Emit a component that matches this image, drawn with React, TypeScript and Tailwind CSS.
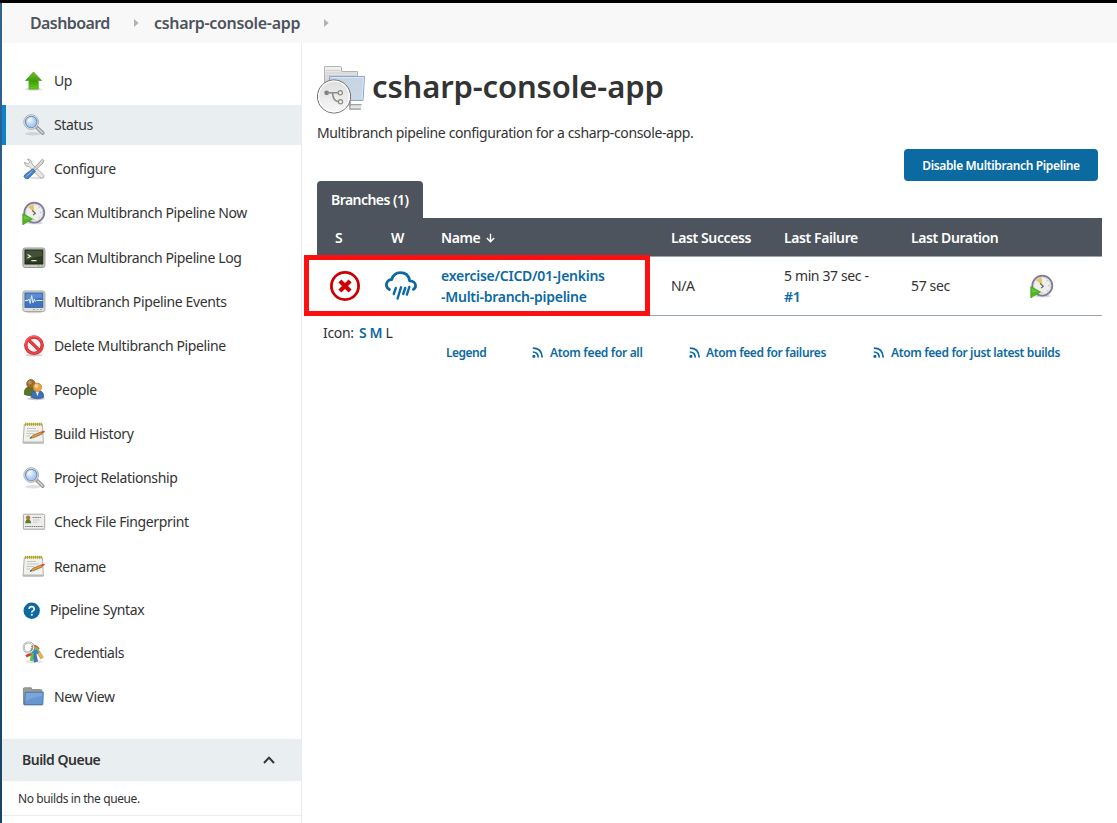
import React from "react";

type IconProps = { className?: string };

const UpIcon = () => (
  <svg width="24" height="24" viewBox="0 0 24 24">
    <defs>
      <linearGradient id="up" x1="0" y1="0" x2="0" y2="1"><stop offset="0" stopColor="#6cc02a" /><stop offset=".55" stopColor="#3f9b0b" /><stop offset="1" stopColor="#62d40c" /></linearGradient>
    </defs>
    <ellipse cx="11.5" cy="20.3" rx="8.5" ry="1.4" fill="#bbb" opacity=".6" />
    <path d="M11.5 3 19.5 11.5H16.2V20H7V11.5H3.5Z" fill="url(#up)" stroke="#58a52a" strokeWidth=".9" />
  </svg>
);

const SearchIcon = () => (
  <svg width="24" height="24" viewBox="0 0 24 24">
    <defs><radialGradient id="lens" cx=".4" cy=".35"><stop offset="0" stopColor="#f2f8ff" /><stop offset="1" stopColor="#a9c8ef" /></radialGradient></defs>
    <ellipse cx="11" cy="20.8" rx="7.5" ry="1.7" fill="#999" opacity=".3" />
    <path d="M14.8 14.4 20.8 20.1" stroke="#909294" strokeWidth="3.6" strokeLinecap="round" />
    <path d="M15.8 15.4 20.6 19.8" stroke="#d0d0ce" strokeWidth="1.8" strokeLinecap="round" />
    <circle cx="9.2" cy="9" r="7.4" fill="#e5e6e4" stroke="#b2b4b1" strokeWidth="1" />
    <circle cx="9.2" cy="9" r="5.7" fill="url(#lens)" stroke="#6b92c6" strokeWidth="1.1" />
    <path d="M6 8.7Q6.4 5.4 9.7 5.2" stroke="#fff" fill="none" />
  </svg>
);

const ToolsIcon = () => (
  <svg width="24" height="24" viewBox="0 0 24 24">
    <ellipse cx="14" cy="21" rx="9" ry="1.2" fill="#999" opacity=".3" />
    <path d="M2.6 5.2Q2.5 9.6 7 9.5L18 20.5Q19.8 22 21.4 20.3T20.8 17.2L10 7Q10 2.5 5.4 2L7.8 4.8 5.8 7Z" fill="#e7e8e6" stroke="#a3a5a2" strokeWidth=".9" />
    <path d="M20.5 2.2 22 3.7 20.5 6.6 13.5 13 12 11.5 18 4.5Z" fill="#d8dad9" stroke="#8b8e8d" strokeWidth=".8" />
    <path d="M10.8 11.8 13.4 14.4 6.6 21.3Q4.5 22.3 2.8 20.8T3 17.6Z" fill="#4b84c9" stroke="#3a6eae" strokeWidth=".9" />
    <path d="M10.5 13.6 4.5 19.4" stroke="#91b8e6" />
  </svg>
);

const ClockIcon = ({ className }: IconProps) => (
  <svg width="24" height="24" viewBox="0 0 24 24" className={className}>
    <ellipse cx="13" cy="22" rx="8" ry="1.3" fill="#777" opacity=".3" />
    <circle cx="12.3" cy="11.7" r="9.9" fill="#eeefeb" stroke="#7f7c95" strokeWidth="1.9" />
    <circle cx="12.3" cy="11.7" r="8.6" fill="none" stroke="#d2d1da" strokeWidth=".9" />
    <path d="M12 11 6.2 6.3Q8.8 4 11.7 3.8Z" fill="#e6c15d" />
    <path d="M10.3 9.3 11.8 11.2M11.6 10.6 13.3 12.2 11.2 14.2" fill="none" stroke="#5a5a55" strokeWidth="1.1" />
    <path d="M19.3 11.7H18.4M12 18.8V18M17.3 6.4 16.7 7M17.4 16.7 16.8 16.2" stroke="#8d8d8d" strokeWidth=".9" />
    <path d="M0.8 12.6 10.6 18 .8 23.8Z" fill="#50b625" stroke="#46a01f" strokeWidth=".8" />
    <path d="M1.7 14.4 8 17.8 1.7 18.4Z" fill="#80d553" opacity=".5" />
  </svg>
);

const TerminalIcon = () => (
  <svg width="24" height="24" viewBox="0 0 24 24">
    <rect x="0.9" y="2" width="22" height="19.5" rx="2.2" fill="#cbccc8" stroke="#969894" />
    <rect x="3" y="4" width="17.8" height="14" fill="#2d3b24" stroke="#192113" />
    <path d="M3.5 4.5H20.3V10Q12 10.5 3.5 15Z" fill="#526342" opacity=".6" />
    <path d="M5.5 8.5 8.5 10.2 5.5 12M9.3 14.7H14.5" fill="none" stroke="#e5efd8" strokeWidth="1.2" />
    <path d="M15.5 20H17.5M19 20H20.5" stroke="#7ca765" />
  </svg>
);

const MonitorIcon = () => (
  <svg width="24" height="24" viewBox="0 0 24 24">
    <ellipse cx="12" cy="22.3" rx="8" ry="1" fill="#aaa" opacity=".5" />
    <rect x="0.9" y="1" width="22" height="20.5" rx="2.2" fill="#dedfdd" stroke="#a5a7a3" />
    <rect x="3" y="3" width="17.8" height="14.3" fill="#3f73c4" stroke="#345f9f" />
    <path d="M3.5 3.5H20.3V7.5Q10 8.5 3.5 12.5Z" fill="#77a3e1" opacity=".5" />
    <path d="M2.8 10.5H6L7 9 8.2 13.5 9.7 5.5 11 13 12.3 9.2 13.2 11.5 14.5 10.5H20.5" fill="none" stroke="#dfebdb" strokeWidth="1" />
    <path d="M11 19.5H13M15 19.5H16M18 19.5H20" stroke="#a6aaa2" />
  </svg>
);

const DeleteIcon = () => (
  <svg width="24" height="24" viewBox="0 0 24 24">
    <ellipse cx="12" cy="21.2" rx="8.5" ry="1.3" fill="#aaa" opacity=".6" />
    <circle cx="12" cy="11.2" r="8.2" fill="#f3f3f3" stroke="#c9252c" strokeWidth="3.4" />
    <path d="M6.3 5.7 17.7 16.7" stroke="#c9252c" strokeWidth="3.2" />
    <circle cx="12" cy="11.2" r="8.2" fill="none" stroke="#ea4147" strokeWidth="2.2" />
    <path d="M6.3 5.7 17.7 16.7" stroke="#e73e43" strokeWidth="2" />
    <path d="M3.6 9.2A8.5 8.5 0 0 1 19 5.7" fill="none" stroke="#fa8585" strokeWidth=".8" />
  </svg>
);

const PeopleIcon = () => (
  <svg width="24" height="24" viewBox="0 0 24 24">
    <ellipse cx="14" cy="20.8" rx="9" ry="1.4" fill="#999" opacity=".5" />
    <path d="M2.4 16.4Q1.8 10 6.5 9L11.5 9Q15 11 14 16.4Q8 19 2.4 16.4Z" fill="#5c7524" stroke="#4a6219" strokeWidth=".8" />
    <circle cx="8.9" cy="5.8" r="4.2" fill="#9c6b2e" stroke="#84591f" strokeWidth=".8" />
    <circle cx="7.8" cy="4.5" r="2" fill="#bf9050" />
    <path d="M9.2 19.5Q8.5 14.5 12.5 12.7H18Q22.3 14.5 21.5 19.5Q15.5 22 9.2 19.5Z" fill="#3f70b4" stroke="#2e5c9d" strokeWidth=".8" />
    <path d="m13.7 13 1.7 5.3 1.7-5.3Z" fill="#edf4ff" />
    <circle cx="15.4" cy="9.3" r="4.2" fill="#e5a445" stroke="#c28733" strokeWidth=".8" />
    <circle cx="14.4" cy="8" r="2" fill="#fbcf8c" />
  </svg>
);

const NotepadIcon = () => (
  <svg width="24" height="24" viewBox="0 0 24 24">
    <path d="M2.3 2.5H20.4L21.4 21H1Z" fill="#f1f1ed" stroke="#a7a9a4" strokeWidth=".9" />
    <path d="M1.2 19.6H21.2V21.4H1Z" fill="#b9bbb7" />
    <path d="M3 2.2H20" stroke="#cfc24a" strokeWidth="2" />
    <path d="M3.5 .8V3.8M5.5 .8V3.8M7.5 .8V3.8M9.5 .8V3.8M11.5 .8V3.8M13.5 .8V3.8M15.5 .8V3.8M17.5 .8V3.8M19.3 .8V3.8" stroke="#a69c35" strokeWidth=".9" />
    <path d="M5 6.5H14M5 9H17M4.5 11.5H12M4.5 14H8" stroke="#bec1be" strokeWidth=".9" />
    <path d="m8 16.2 3-3 8.2-3.3 1 2-8.3 3.7Z" fill="#d99f47" stroke="#97682c" strokeWidth=".8" />
    <path d="m19 9.7 2.1-1Q22.7 8.4 23 9.6 22.8 10.8 20.2 11.6Z" fill="#e34d36" />
    <path d="m7.7 16.5 1.4-1.3.7.8Z" fill="#222" />
  </svg>
);

const FingerprintIcon = () => (
  <svg width="24" height="24" viewBox="0 0 24 24">
    <rect x="1.4" y="4.2" width="21.3" height="15" rx="1" fill="#edeeea" stroke="#a9aba8" />
    <path d="M1.5 19.4H22.5" stroke="#bbb" />
    <circle cx="6.1" cy="7.8" r="2.2" fill="#a87d30" />
    <path d="M3.2 13.3Q3.2 10 5.3 9.4H7.2Q9.2 10.3 9.2 13.3Z" fill="#667a2b" />
    <path d="M10.5 7.5H19" stroke="#888" strokeWidth="1.2" strokeDasharray="2 .4" />
    <path d="M11 10H18M11 12.2H15.5" stroke="#c4c4c4" strokeWidth=".8" />
    <path d="M3 16.5H21.2" stroke="#777" strokeDasharray="1.5 .7" strokeWidth="1" />
  </svg>
);

const HelpIcon = () => (
  <svg width="17" height="17" viewBox="0 0 17 17" className="ml-px">
    <circle cx="8.7" cy="8.8" r="8.2" fill="#0b6aa2" />
    <path d="M6.2 6.9Q6.2 4.7 8.6 4.7T11.2 6.9Q11.2 8.1 9.8 8.9 8.8 9.5 8.8 10.5" fill="none" stroke="#fff" strokeWidth="1.7" />
    <circle cx="8.8" cy="12.8" r="1.05" fill="#fff" />
  </svg>
);

const CredentialsIcon = () => (
  <svg width="24" height="24" viewBox="0 0 24 24">
    <ellipse cx="12" cy="20.6" rx="9" ry="1.6" fill="#999" opacity=".25" />
    <path d="m15 9 5.2 8.2" stroke="#c29d35" strokeWidth="3.6" />
    <path d="m15 9 5 7.8" stroke="#e2bd50" strokeWidth="2.2" />
    <path d="M11.8 11 14 21" stroke="#3f76bb" strokeWidth="4.2" />
    <path d="M10.5 12 9.3 20" stroke="#62c62f" strokeWidth="3" />
    <path d="M4 15.3 9 13" stroke="#dc3b3f" strokeWidth="2.6" />
    <path d="M9.5 6Q13 3 17 8" fill="none" stroke="#d9553a" strokeWidth="2" />
    <path d="M9 8.2Q13 5 16.5 9.7" fill="none" stroke="#77bd3c" strokeWidth="2" />
    <path d="M9 11Q12 7.5 16 12.3" fill="none" stroke="#3c87c9" strokeWidth="3.4" />
    <circle cx="6.7" cy="6.5" r="5" fill="none" stroke="#9a9c9b" strokeWidth="2" />
    <circle cx="6.7" cy="6.5" r="5" fill="none" stroke="#ebecea" strokeWidth="1" />
  </svg>
);

const FolderIcon = () => (
  <svg width="24" height="24" viewBox="0 0 24 24">
    <path d="M1.3 4Q1.3 2.8 2.5 2.8H9.2L10 4.6H18.5Q20 4.6 20 6V19.5H1.6Z" fill="#9b9c98" stroke="#858783" strokeWidth=".9" />
    <path d="M3.2 7.2H21.3L20.8 19.6H2.6Z" fill="#6797d0" stroke="#4375b1" strokeWidth=".9" />
    <path d="M4 8H20.5L20.2 11Q11 12 3.5 16Z" fill="#8bb1df" opacity=".6" />
    <path d="M2 20.6H20.5" stroke="#ccc" />
  </svg>
);

const ProjectIcon = () => (
  <svg width="48" height="48" viewBox="0 0 48 48">
    <defs>
      <linearGradient id="paper" x1="0" y1="0" x2="0" y2="1"><stop stopColor="#f3f3f3" /><stop offset="1" stopColor="#b2b2b2" /></linearGradient>
      <linearGradient id="folder" x1="0" y1="0" x2="1" y2="1"><stop stopColor="#c3d1e1" /><stop offset="1" stopColor="#cdd8e5" /></linearGradient>
      <linearGradient id="disc" x1="0" y1="0" x2="0" y2="1"><stop stopColor="#dedede" /><stop offset="1" stopColor="#f7f7f7" /></linearGradient>
    </defs>
    <path d="M7.5 1Q7.5.5 8 .5H23.5Q24.5.5 24.5 2V5.5H40.5V30H7.5Z" fill="url(#paper)" stroke="#b2b2b2" />
    <path d="M9 4.5H23M9 7H39M9 9.5H39" stroke="#d0d0d0" />
    <path d="M12.5 10.5H47.5L46 34.5H12.5Z" fill="url(#folder)" stroke="#88a6d0" />
    <path d="M13.5 11.5H46.3L45 33.5" fill="none" stroke="#dce8f5" />
    <path d="M33 35.5V43H44M32 38.8H44.5" stroke="#a0a0a0" strokeWidth="1.6" fill="none" />
    <path d="M34.5 40.7H44.5" stroke="#e2e2e2" strokeWidth="2" />
    <circle cx="17" cy="30.5" r="16.5" fill="url(#disc)" stroke="#626262" />
    <circle cx="17" cy="30.5" r="15.3" fill="none" stroke="#fff" strokeWidth="1.2" />
    <circle cx="9.7" cy="26.8" r="2.4" fill="#80817b" />
    <path d="M10 26.8H21.2M15.5 27Q16 35 21.5 35.8" fill="none" stroke="#8b8c86" strokeWidth="1.6" />
    <circle cx="23.3" cy="26.8" r="2.1" fill="#eee" stroke="#8b8c86" strokeWidth="1.2" />
    <circle cx="23.5" cy="35.8" r="2.1" fill="#eee" stroke="#8b8c86" strokeWidth="1.2" />
  </svg>
);

const FailedIcon = () => (
  <svg width="30" height="30" viewBox="0 0 30 30" fill="none" stroke="#cc0003">
    <circle cx="15" cy="15" r="13.6" strokeWidth="2.8" />
    <path d="m9.9 9.9 10.2 10.2m0-10.2L9.9 20.1" strokeWidth="4.2" />
  </svg>
);

const RainIcon = () => (
  <svg width="32" height="30" viewBox="0 0 32 30" fill="none" stroke="#0b6aa2" strokeWidth="2.8" strokeLinecap="round" strokeLinejoin="round">
    <path d="M4.4 18.5Q1.4 16.7 1.4 13.7A5.5 5.5 0 0 1 6.7 8.5C8 4.3 11 1.7 15.4 1.7C20.5 1.7 23.9 5 24.7 9.9C28.2 9.9 30.6 12 30.6 14.8Q30.6 17.2 28.3 18.4" />
    <path d="m10.8 17-2 6M16 16.3l-3.4 11.2M20.2 17l-2 6M24.3 16l-2.4 7.6" strokeWidth="2.4" />
  </svg>
);

const FeedIcon = () => (
  <svg width="11" height="11" viewBox="0 0 11 11" fill="none" stroke="#0b6aa2" strokeWidth="1.7">
    <path d="M.8 1.2Q9.8 1.2 10.2 10.5M.8 5Q5.9 5 6.3 10.5" />
    <circle cx="1.9" cy="9.3" r=".75" fill="#0b6aa2" />
  </svg>
);

const Crumb = () => (
  <svg width="5" height="8" viewBox="0 0 5 8"><path d="M0 0 4.6 4 0 8Z" fill="#b0b2b4" /></svg>
);

const menu: { label: string; icon: React.ReactNode; style: string }[] = [
  { label: "Up", icon: <UpIcon />, style: "h-[44px]" },
  { label: "Status", icon: <SearchIcon />, style: "h-[44px]" },
  { label: "Configure", icon: <ToolsIcon />, style: "h-[44px]" },
  { label: "Scan Multibranch Pipeline Now", icon: <ClockIcon />, style: "h-[45px]" },
  { label: "Scan Multibranch Pipeline Log", icon: <TerminalIcon />, style: "h-[44px]" },
  { label: "Multibranch Pipeline Events", icon: <MonitorIcon />, style: "h-[44px]" },
  { label: "Delete Multibranch Pipeline", icon: <DeleteIcon />, style: "h-[44px]" },
  { label: "People", icon: <PeopleIcon />, style: "h-[44px]" },
  { label: "Build History", icon: <NotepadIcon />, style: "h-[44px]" },
  { label: "Project Relationship", icon: <SearchIcon />, style: "h-[44px]" },
  { label: "Check File Fingerprint", icon: <FingerprintIcon />, style: "h-[45px]" },
  { label: "Rename", icon: <NotepadIcon />, style: "h-[43px]" },
  { label: "Pipeline Syntax", icon: <HelpIcon />, style: "h-[43px]" },
  { label: "Credentials", icon: <CredentialsIcon />, style: "h-[44px]" },
  { label: "New View", icon: <FolderIcon />, style: "h-[62px]" },
];

function Sidebar() {
  return (
    <aside className="flex w-[300px] shrink-0 flex-col border-r border-[#e9edf0] pt-[18px]">
      <nav>
        {menu.map((item) => (
          <div key={item.label} className={item.style}>
            <a className={item.label === "Status" ? "flex h-10 items-center border-l-4 border-[#0b84d0] bg-[#e9eef1] pl-4 text-sm tracking-[-0.35px]" : "flex h-10 items-center pl-5 text-sm tracking-[-0.37px]"}>
              {item.icon}
              <span className={item.label === "Pipeline Syntax" ? "ml-[10px]" : "ml-2"}>{item.label}</span>
            </a>
          </div>
        ))}
      </nav>
      <div className="flex h-[42px] items-center justify-between bg-[#e9eef1] pr-[26px] pl-5 text-sm font-semibold tracking-[-0.5px]">
        <span className="-mt-px">Build Queue</span>
        <svg width="12" height="8" viewBox="0 0 12 8" fill="none" stroke="#333" strokeWidth="2"><path d="m1 7 5-5.4L11 7" /></svg>
      </div>
      <div className="h-[35px] border-b border-[#e9edf0] pl-4 text-xs leading-[36px] tracking-[-0.4px]">No builds in the queue.</div>
    </aside>
  );
}

const columns = "grid grid-cols-[68px_56px_230px_113px_127px_119px_1fr] items-center";

function Branches() {
  return (
    <section>
      <div className="flex h-[37px] w-[106px] items-center rounded-t bg-[#4d545d] pt-px pl-[14px] text-sm leading-[20px] font-semibold tracking-[-0.54px] text-white">Branches (1)</div>
      <div className={`${columns} h-[38px] bg-[#4d545d] pt-[2px] text-sm font-semibold tracking-[-0.4px] text-white`}>
        <span className="pl-[18px]">S</span>
        <span className="pl-[6px]">W</span>
        <span className="flex items-center gap-[6px]">
          Name
          <svg width="9" height="10" viewBox="0 0 9 10" fill="none" stroke="white" strokeWidth="1.4"><path d="M4.5 0.8V8.5M.8 5 4.5 8.7 8.2 5" /></svg>
        </span>
        <span>Last Success</span>
        <span>Last Failure</span>
        <span>Last Duration</span>
      </div>
      <div className={`${columns} relative h-[60px] border-y border-[#98a4ae] text-sm leading-[21px] tracking-[-0.37px]`}>
        <span className="pl-[13px]"><FailedIcon /></span>
        <span><RainIcon /></span>
        <a className="pb-px font-semibold tracking-[-0.26px] text-[#0b6aa2]">exercise/CICD/01-Jenkins<br />-Multi-branch-pipeline</a>
        <span className="pb-[2px]">N/A</span>
        <span className="pb-px">5 min 37 sec -<br /><b className="font-semibold text-[#0b6aa2]">#1</b></span>
        <span className="pb-[2px]">57 sec</span>
        <ClockIcon />
        <div className="absolute -top-[2px] -left-[13px] h-[61px] w-[346px] border-[5px] border-[#ff1010]" />
      </div>
    </section>
  );
}

export default function App() {
  return (
    <div className="flex h-[823px] w-[1117px] flex-col overflow-hidden border-t-[3px] border-black bg-white font-['Noto_Sans',sans-serif] text-[#333]">
      <div className="flex min-h-0 flex-1">
        <div className="w-[2px] shrink-0 bg-gradient-to-b from-[#30648f] to-[#174568]" />
        <div className="flex min-w-0 flex-1 flex-col">
          <header className="flex h-10 shrink-0 items-center bg-[#f8f8f8] pl-7 text-base font-semibold text-[#4d545d]">
            <span className="w-[104px] tracking-[-0.6px]">Dashboard</span>
            <Crumb />
            <span className="ml-[15px] w-[170px] tracking-[-0.32px]">csharp-console-app</span>
            <Crumb />
          </header>
          <div className="flex min-h-0 flex-1">
            <Sidebar />
            <main className="flex w-[800px] flex-col pl-[15px]">
              <div className="mt-[23px] flex h-12 items-center gap-[7px]">
                <ProjectIcon />
                <h1 className="-mt-[7px] text-[31px] font-semibold tracking-[-0.14px]">csharp-console-app</h1>
              </div>
              <p className="mt-2 h-[22px] text-sm leading-[22px] tracking-[-0.37px]">Multibranch pipeline configuration for a csharp-console-app.</p>
              <div className="mt-[5px] mr-1 flex h-8 justify-end">
                <button className="w-[194px] rounded bg-[#0b6aa2] pt-px text-xs font-semibold tracking-[-0.35px] text-white">Disable Multibranch Pipeline</button>
              </div>
              <Branches />
              <div className="mt-[6px] pl-[6px] text-sm leading-[22px] tracking-[-0.35px]">
                Icon: <span className="ml-[2px] font-semibold text-[#0b6aa2]">S M</span> L
              </div>
              <div className="-mt-px flex h-[18px] items-center pl-[129px] text-xs font-semibold tracking-[-0.37px] text-[#0b6aa2]">
                <a className="w-[86px] pt-px tracking-[-0.5px]">Legend</a>
                <a className="flex w-[157px] items-center gap-[7px]"><FeedIcon /><span className="pt-px tracking-[-0.33px]">Atom feed for all</span></a>
                <a className="flex w-[184px] items-center gap-[6px]"><FeedIcon /><span className="pt-px">Atom feed for failures</span></a>
                <a className="flex items-center gap-[7px] whitespace-nowrap"><FeedIcon /><span className="pt-px">Atom feed for just latest builds</span></a>
              </div>
            </main>
          </div>
        </div>
      </div>
    </div>
  );
}
